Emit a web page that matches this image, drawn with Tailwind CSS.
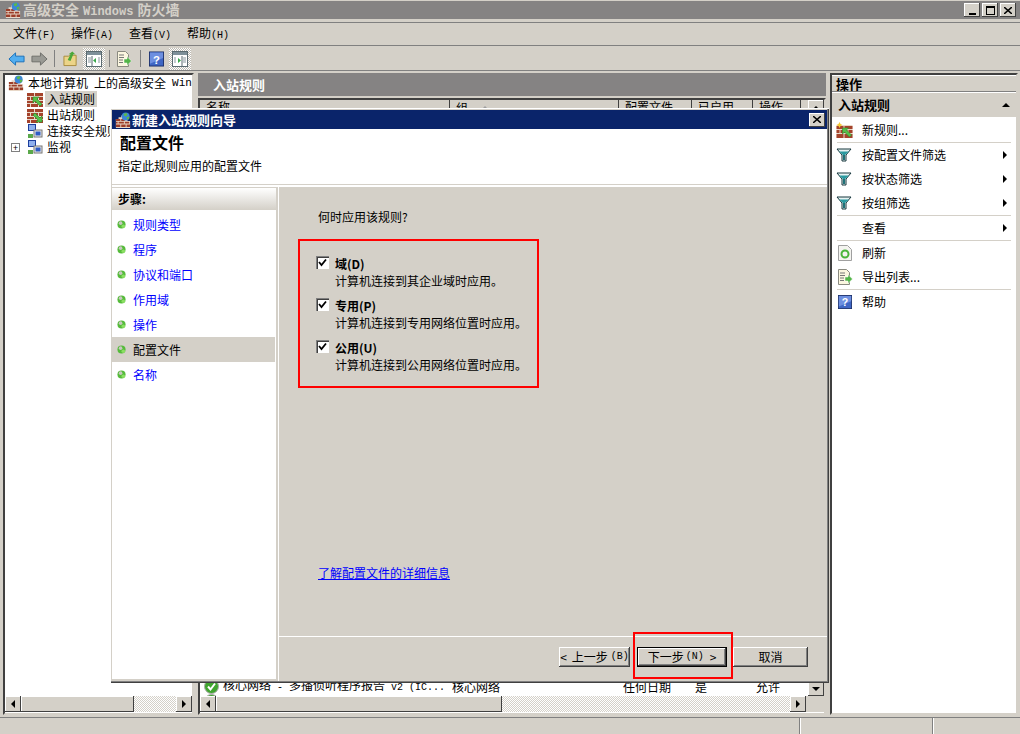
<!DOCTYPE html>
<html lang="zh"><head><meta charset="utf-8"><script src="https://cdn.jsdelivr.net/npm/@tailwindcss/browser@4"></script></head>
<body class="m-0">
<svg class="absolute w-0 h-0">
<defs>
<symbol id="wallin" viewBox="0 0 16 16"><rect x="0" y="2" width="16" height="14" fill="#e8d8c8"/><path d="M0 2h7v3H0zM8 2h8v3H8zM0 6h3v3H0zM4 6h7v3H4zM12 6h4v3h-4zM0 10h7v2H0zM8 10h8v2H8zM0 13h3v3H0zM4 13h7v3H4zM12 13h4v3h-4z" fill="#a5432c"/><path d="M6 6h6l-2 2 5 5-2 2-5-5-2 2z" fill="#55c04a" stroke="#2f8a2a" stroke-width=".6"/></symbol>
<symbol id="wallout" viewBox="0 0 16 16"><rect x="0" y="2" width="16" height="14" fill="#e8d8c8"/><path d="M0 2h7v3H0zM8 2h8v3H8zM0 6h3v3H0zM4 6h7v3H4zM12 6h4v3h-4zM0 10h7v2H0zM8 10h8v2H8zM0 13h3v3H0zM4 13h7v3H4zM12 13h4v3h-4z" fill="#a5432c"/><path d="M15 15H9l2-2-5-5 2-2 5 5 2-2z" fill="#55c04a" stroke="#2f8a2a" stroke-width=".6"/></symbol>
<symbol id="wallnew" viewBox="0 0 16 16"><rect x="0" y="3" width="16" height="13" fill="#e8d8c8"/><path d="M0 4h7v3H0zM8 4h8v3H8zM0 8h3v3H0zM4 8h7v3H4zM12 8h4v3h-4zM0 12h7v4H0zM8 12h8v4H8z" fill="#a5432c"/><path d="M6 6h6l-2 2 5 5-2 2-5-5-2 2z" fill="#55c04a" stroke="#2f8a2a" stroke-width=".6"/><path d="M3 0l1 2 2 1-2 1-1 2-1-2-2-1 2-1z" fill="#f6c930"/></symbol>
<symbol id="fw" viewBox="0 0 18 18"><path d="M1 8h3V6h3V4h4v4h3v2h3v8H1z" fill="#e8d8c8"/><path d="M1 8h5v2H1zM7 8h4v2H7zM1 11h2v2H1zM4 11h6v2H4zM11 11h5v2h-5zM1 14h5v3H1zM7 14h5v3H7zM13 14h4v3h-4z" fill="#9c3e29"/><circle cx="12" cy="5" r="4.500" fill="#3b86d8"/><path d="M10 2l3-1 1 2-2 2-2-1zM13 6l3-1v2l-2 2z" fill="#5cb84a"/></symbol>
<symbol id="fil" viewBox="0 0 16 16"><path d="M1 2h14L10 8v6H6V8z" fill="#e6f2f2" stroke="#16363c"/><path d="M3 4.500h10L9 8H7z" fill="#2a9aa0"/><path d="M7 8h2v5H7z" fill="#1f7278"/></symbol>
<symbol id="help" viewBox="0 0 16 16"><rect x=".5" y=".5" width="15" height="15" fill="#3f66c4" stroke="#1b2f6b"/><path d="M1 1h14v6L1 13z" fill="#6d8fe0"/><text x="8" y="13" font-size="12" font-weight="700" text-anchor="middle" fill="#fff" font-family="Liberation Sans">?</text></symbol>
<symbol id="exp" viewBox="0 0 16 16"><path d="M1.500.5h8l3 3v12h-11z" fill="#fbf6df" stroke="#8a8a80"/><path d="M3 4h5M3 6.500h5M3 9h4M3 11.500h4" stroke="#777"/><path d="M8 8h3V5.500L15.500 10 11 14.500V12H8z" fill="#53b548" stroke="#fff" stroke-width=".5"/></symbol>
<symbol id="paneleft" viewBox="0 0 16 16"><rect x=".5" y=".5" width="15" height="15" fill="#fff" stroke="#5a6a70"/><path d="M1 1h14v3H1z" fill="#7d8f98"/><path d="M6 5v10" stroke="#5a6a70"/><path d="M2 7h3M2 9h3M2 11h3M12 7h2M12 9h2M12 11h2" stroke="#8a989e"/><path d="M10 7v5L7 9.500z" fill="#3aa84a"/></symbol>
<symbol id="paneright" viewBox="0 0 16 16"><rect x=".5" y=".5" width="15" height="15" fill="#fff" stroke="#5a6a70"/><path d="M1 1h14v3H1z" fill="#7d8f98"/><path d="M10 5v10" stroke="#5a6a70"/><path d="M2 7h2M2 9h2M2 11h2M11 7h3M11 9h3M11 11h3" stroke="#8a989e"/><path d="M6 7v5l3-2.500z" fill="#3aa84a"/></symbol>
<symbol id="dot" viewBox="0 0 10 10"><circle cx="5" cy="5" r="4.500" fill="#55bb3a"/><circle cx="4" cy="3.500" r="2" fill="#c8c8c0"/><circle cx="7" cy="7" r="2" fill="#8adf62"/></symbol>
<symbol id="pc" viewBox="0 0 16 16"><rect x="1" y="1" width="8" height="7" fill="#1d3f9e"/><rect x="2" y="2" width="6" height="5" fill="#8fb0ee"/><rect x="7" y="7" width="8" height="7" fill="#e8e8e8" stroke="#777"/><rect x="8.500" y="8.500" width="5" height="4" fill="#2f5cc4"/><rect x="1" y="11" width="5" height="4" fill="#5aa84a"/></symbol>
</defs>
</svg>

<div class="relative w-[1020px] h-[734px] overflow-hidden bg-[#d4d0c8] text-[12px] leading-[14px] text-black font-['Noto_Sans_CJK_SC','Noto_Sans',sans-serif]">

  <!-- title bar -->
  <div class="flex items-center h-[18px] mt-[1px] bg-[#858383] text-[#d4d0c8] text-[14px] pl-[5px] pr-[4px]">
    <svg class="w-[16px] h-[16px] mr-[2px]"><use href="#fw"/></svg>
    <span class="font-bold whitespace-nowrap">高级安全<span class="font-['Liberation_Mono',monospace] text-[12px] mx-[4px]">Windows</span>防火墙</span>
    <div class="ml-auto flex gap-[2px]">
      <div class="w-[16px] h-[14px] bg-[#d4d0c8] shadow-[inset_-1px_-1px_#404040,inset_1px_1px_#fff] flex items-end justify-center pb-[2px]"><div class="w-[7px] h-[2px] bg-black"></div></div>
      <div class="w-[16px] h-[14px] bg-[#d4d0c8] shadow-[inset_-1px_-1px_#404040,inset_1px_1px_#fff] flex items-center justify-center"><div class="w-[9px] h-[9px] border border-black border-t-2"></div></div>
      <div class="w-[16px] h-[14px] bg-[#d4d0c8] shadow-[inset_-1px_-1px_#404040,inset_1px_1px_#fff] flex items-center justify-center"><svg class="w-[8px] h-[7px]" viewBox="0 0 8 7"><path d="M0 0l8 7M8 0L0 7" stroke="#000" stroke-width="1.500"/></svg></div>
    </div>
  </div>

  <!-- menu -->
  <div class="flex items-center h-[24px] mt-[3px] border-y border-y-[#808080] bg-[#d4d0c8] pl-[13px] gap-[16px]">
    <span>文件<span class="font-['Liberation_Mono',monospace] text-[10px]">(F)</span></span>
    <span>操作<span class="font-['Liberation_Mono',monospace] text-[10px]">(A)</span></span>
    <span>查看<span class="font-['Liberation_Mono',monospace] text-[10px]">(V)</span></span>
    <span>帮助<span class="font-['Liberation_Mono',monospace] text-[10px]">(H)</span></span>
  </div>

  <!-- toolbar -->
  <div class="flex items-center h-[25px] border-b border-b-[#808080] pl-[8px] pt-[1px]">
    <svg class="w-[17px] h-[14px]" viewBox="0 0 18 14"><path d="M1 7l7-6.500V4h9v6H8v3.500z" fill="#52aef0" stroke="#1a6fb8"/></svg>
    <svg class="w-[17px] h-[14px] ml-[6px]" viewBox="0 0 18 14"><path d="M17 7l-7-6.500V4H1v6h9v3.500z" fill="#9a9a94" stroke="#6c6c68"/></svg>
    <div class="w-px h-[17px] bg-[#808080] ml-[6px]"></div>
    <svg class="w-[15px] h-[16px] ml-[8px]" viewBox="0 0 16 16"><path d="M1 5h5l1-1h7v11H1z" fill="#ecd488" stroke="#a88a3a"/><path d="M5 9l3-6H6l4-3 3 3h-2L8 10z" fill="#4aa83a"/></svg>
    <div class="w-[22px] h-[22px] ml-[5px] flex items-center justify-center bg-[repeating-conic-gradient(#bdbab2_0_25%,#fff_0_50%)] bg-[length:2px_2px]"><svg class="w-[16px] h-[16px]"><use href="#paneleft"/></svg></div>
    <div class="w-px h-[17px] bg-[#808080] ml-[4px]"></div>
    <svg class="w-[16px] h-[16px] ml-[6px]"><use href="#exp"/></svg>
    <div class="w-px h-[17px] bg-[#808080] ml-[8px]"></div>
    <svg class="w-[15px] h-[18px] ml-[8px]"><use href="#help"/></svg>
    <div class="w-[22px] h-[22px] ml-[5px] flex items-center justify-center bg-[repeating-conic-gradient(#bdbab2_0_25%,#fff_0_50%)] bg-[length:2px_2px]"><svg class="w-[16px] h-[16px]"><use href="#paneright"/></svg></div>
  </div>

  <!-- panes -->
  <div class="flex h-[642px] mt-[2px] pl-[3px] pr-[2px] gap-[4px]">
    <!-- tree -->
    <div class="w-[191px] flex flex-col bg-white border-2 border-t-[#404040] border-l-[#404040] border-r-[#d4d0c8] border-b-[#d4d0c8] overflow-hidden">
      <div class="flex-1 overflow-hidden whitespace-nowrap">
        <div class="flex items-center h-[16px] pl-[3px]"><svg class="w-[16px] h-[16px] mr-[4px] shrink-0"><use href="#fw"/></svg><span class="shrink-0">本地计算机</span><span class="shrink-0 ml-[6px]">上的高级安全</span><span class="shrink-0 font-['Liberation_Mono',monospace] text-[11px] ml-[6px]">Wind</span></div>
        <div class="flex items-center h-[16px] pl-[22px]"><svg class="w-[16px] h-[16px] shrink-0"><use href="#wallin"/></svg><span class="ml-[2px] px-[2px] bg-[#d4d0c8] leading-[16px]">入站规则</span></div>
        <div class="flex items-center h-[16px] pl-[22px]"><svg class="w-[16px] h-[16px] shrink-0"><use href="#wallout"/></svg><span class="ml-[2px] px-[2px]">出站规则</span></div>
        <div class="flex items-center h-[16px] pl-[22px]"><svg class="w-[16px] h-[16px] shrink-0"><use href="#pc"/></svg><span class="ml-[2px] px-[2px]">连接安全规则</span></div>
        <div class="flex items-center h-[16px] pl-[6px]"><div class="w-[9px] h-[9px] border border-[#808080] flex items-center justify-center text-[9px] leading-none mr-[7px]">+</div><svg class="w-[16px] h-[16px] shrink-0"><use href="#pc"/></svg><span class="ml-[2px] px-[2px]">监视</span></div>
      </div>
      <div class="flex h-[16px] bg-[repeating-conic-gradient(#d4d0c8_0_25%,#fff_0_50%)] bg-[length:2px_2px] shrink-0 mb-[1px]">
        <div class="w-[16px] bg-[#d4d0c8] shadow-[inset_-1px_-1px_#404040,inset_1px_1px_#fff] flex items-center justify-center"><div class="border-y-[4px] border-y-transparent border-r-[4px] border-r-black"></div></div>
        <div class="w-[113px] bg-[#d4d0c8] shadow-[inset_-1px_-1px_#404040,inset_1px_1px_#fff]"></div>
        <div class="w-[16px] ml-auto bg-[#d4d0c8] shadow-[inset_-1px_-1px_#404040,inset_1px_1px_#fff] flex items-center justify-center"><div class="border-y-[4px] border-y-transparent border-l-[4px] border-l-black"></div></div>
      </div>
    </div>

    <!-- centre -->
    <div class="w-[628px] flex flex-col">
      <div class="h-[23px] bg-[#858383] text-white font-bold text-[13px] flex items-center pl-[15px]">入站规则</div>
      <div class="flex-1 mt-[2px] flex flex-col border-2 border-t-[#404040] border-l-[#404040] border-r-[#d4d0c8] border-b-[#d4d0c8] bg-white overflow-hidden">
        <div class="flex h-[16px] bg-[#d4d0c8] shrink-0">
          <div class="w-[250px] border-r border-[#404040] pl-[6px]">名称</div>
          <div class="w-[169px] border-r border-[#404040] pl-[6px] flex items-center gap-[12px]">组<div class="border-x-[5px] border-x-transparent border-b-[5px] border-b-[#a0a0a0]"></div></div>
          <div class="w-[73px] border-r border-[#404040] pl-[6px]">配置文件</div>
          <div class="w-[61px] border-r border-[#404040] pl-[6px]">已启用</div>
          <div class="w-[48px] border-r border-[#404040] pl-[6px]">操作</div>
          <div class="ml-auto w-[16px] shadow-[inset_-1px_-1px_#404040,inset_1px_1px_#fff] flex items-center justify-center"><div class="border-x-[4px] border-x-transparent border-b-[4px] border-b-black"></div></div>
        </div>
        <div class="flex-1 flex overflow-hidden">
          <div class="flex-1 flex flex-col justify-end overflow-hidden whitespace-nowrap">
            <div class="flex items-center h-[15px] shrink-0">
              <svg class="w-[15px] h-[15px] ml-[4px] shrink-0" viewBox="0 0 15 15"><circle cx="7.500" cy="7.500" r="7" fill="#3fa52e" stroke="#aaa"/><path d="M4 7.500l2.500 3L11 4.500" stroke="#fff" stroke-width="2" fill="none"/></svg>
              <span class="w-[233px] pl-[4px] shrink-0">核心网络<span class="font-['Liberation_Mono',monospace] text-[10px]"> - </span>多播侦听程序报告<span class="font-['Liberation_Mono',monospace] text-[10px]"> v2 (IC...</span></span>
              <span class="w-[171px] shrink-0">核心网络</span>
              <span class="w-[72px] shrink-0">任何日期</span>
              <span class="w-[61px] shrink-0">是</span>
              <span>允许</span>
            </div>
            <div class="flex items-start h-[2px] shrink-0 overflow-hidden">
              <svg class="w-[15px] h-[15px] ml-[4px] shrink-0" viewBox="0 0 15 15"><circle cx="7.500" cy="7.500" r="7" fill="#3fa52e" stroke="#aaa"/></svg>
            </div>
          </div>
          <div class="w-[16px] flex flex-col justify-end bg-[#e8e6e0] shrink-0">
            <div class="h-[15px] bg-[#d4d0c8] shadow-[inset_-1px_-1px_#404040,inset_1px_1px_#fff] flex items-center justify-center"><div class="border-x-[4px] border-x-transparent border-t-[4px] border-t-black"></div></div>
          </div>
        </div>
        <div class="flex h-[16px] shrink-0 mb-[1px]">
          <div class="flex flex-1 bg-[repeating-conic-gradient(#d4d0c8_0_25%,#fff_0_50%)] bg-[length:2px_2px]">
            <div class="w-[16px] bg-[#d4d0c8] shadow-[inset_-1px_-1px_#404040,inset_1px_1px_#fff] flex items-center justify-center"><div class="border-y-[4px] border-y-transparent border-r-[4px] border-r-black"></div></div>
            <div class="w-[286px] bg-[#d4d0c8] shadow-[inset_-1px_-1px_#404040,inset_1px_1px_#fff]"></div>
            <div class="w-[16px] ml-auto bg-[#d4d0c8] shadow-[inset_-1px_-1px_#404040,inset_1px_1px_#fff] flex items-center justify-center"><div class="border-y-[4px] border-y-transparent border-l-[4px] border-l-black"></div></div>
          </div>
          <div class="w-[18px] bg-[#d4d0c8]"></div>
        </div>
      </div>
    </div>

    <!-- actions -->
    <div class="flex-1 flex flex-col bg-white border-2 border-t-[#404040] border-l-[#404040] border-r-[#d4d0c8] border-b-[#d4d0c8]">
      <div class="h-[16px] mt-[1px] bg-[#d4d0c8] font-bold pl-[4px] text-[13px] leading-[16px] border-b border-b-[#808080] shrink-0">操作</div>
      <div class="flex items-center justify-between h-[25px] bg-[#d4d0c8] border-t border-t-white font-bold text-[13px] pl-[6px] pr-[6px] shrink-0">入站规则<div class="border-x-[4px] border-x-transparent border-b-[4px] border-b-black"></div></div>
      <div class="flex items-center h-[24px] pl-[4px] mt-[1px]"><svg class="w-[17px] h-[16px]"><use href="#wallnew"/></svg><span class="ml-[9px]">新规则...</span></div>
      <div class="h-px bg-[#d4d0c8] mx-[5px]"></div>
      <div class="flex items-center h-[24px] pl-[4px] mr-[9px]"><svg class="w-[16px] h-[16px]"><use href="#fil"/></svg><span class="ml-[10px]">按配置文件筛选</span><div class="ml-auto border-y-[4px] border-y-transparent border-l-[4px] border-l-black"></div></div>
      <div class="flex items-center h-[24px] pl-[4px] mr-[9px]"><svg class="w-[16px] h-[16px]"><use href="#fil"/></svg><span class="ml-[10px]">按状态筛选</span><div class="ml-auto border-y-[4px] border-y-transparent border-l-[4px] border-l-black"></div></div>
      <div class="flex items-center h-[24px] pl-[4px] mr-[9px]"><svg class="w-[16px] h-[16px]"><use href="#fil"/></svg><span class="ml-[10px]">按组筛选</span><div class="ml-auto border-y-[4px] border-y-transparent border-l-[4px] border-l-black"></div></div>
      <div class="h-px bg-[#d4d0c8] mx-[5px]"></div>
      <div class="flex items-center h-[24px] pl-[30px] mr-[9px]"><span>查看</span><div class="ml-auto border-y-[4px] border-y-transparent border-l-[4px] border-l-black"></div></div>
      <div class="h-px bg-[#d4d0c8] mx-[5px]"></div>
      <div class="flex items-center h-[24px] pl-[6px]"><svg class="w-[14px] h-[16px]" viewBox="0 0 14 16"><path d="M.5.500h9l4 4v11H.5z" fill="#f4f4f0" stroke="#a0a0a0"/><circle cx="7" cy="9" r="3.500" fill="none" stroke="#4ab53a" stroke-width="2"/></svg><span class="ml-[10px]">刷新</span></div>
      <div class="flex items-center h-[24px] pl-[5px]"><svg class="w-[16px] h-[16px]"><use href="#exp"/></svg><span class="ml-[9px]">导出列表...</span></div>
      <div class="h-px bg-[#d4d0c8] mx-[5px]"></div>
      <div class="flex items-center h-[24px] pl-[6px]"><svg class="w-[14px] h-[16px]"><use href="#help"/></svg><span class="ml-[10px]">帮助</span></div>
    </div>
  </div>

  <!-- status -->
  <div class="flex h-[18px] mt-[2px] border-t border-t-[#808080]">
    <div class="w-[800px] border-r border-r-[#808080]"></div>
    <div class="w-[133px] border-l border-l-white border-r border-r-[#808080]"></div>
    <div class="flex-1 border-l border-l-white"></div>
  </div>

  <!-- wizard dialog (floating window) -->
  <div class="absolute left-[110px] top-[108px] w-[719px] h-[575px] flex flex-col bg-[#d4d0c8] p-[2px] shadow-[inset_1px_1px_#fff,inset_-1px_-1px_#404040,inset_-2px_-2px_#808080]">
    <div class="flex items-center h-[19px] bg-[#0a246a] text-white font-bold text-[13px] pl-[3px] pr-[2px] shrink-0">
      <svg class="w-[16px] h-[16px] mr-[1px]"><use href="#fw"/></svg>新建入站规则向导
      <div class="ml-auto w-[16px] h-[14px] bg-[#d4d0c8] shadow-[inset_-1px_-1px_#404040,inset_1px_1px_#fff] flex items-center justify-center"><svg class="w-[8px] h-[7px]" viewBox="0 0 8 7"><path d="M0 0l8 7M8 0L0 7" stroke="#000" stroke-width="1.500"/></svg></div>
    </div>
    <div class="h-[56px] bg-white border-b border-b-[#d4d0c8] pl-[6px] pt-[5px] shrink-0">
      <div class="font-bold text-[16px] leading-[16px] ml-[2px]">配置文件</div>
      <div class="mt-[9px]">指定此规则应用的配置文件</div>
    </div>
    <div class="flex flex-1 pt-[2px] bg-white">
      <div class="w-[166px] border-2 border-[#d4d0c8] border-t-0 border-l-0 bg-white shrink-0 flex flex-col">
        <div class="h-[23px] border-t border-t-[#d4d0c8] bg-linear-to-b from-white to-[#d4d0c8] font-bold flex items-center pl-[6px]">步骤:</div>
        <div class="pt-[2px]">
          <div class="flex items-center h-[25px] pl-[5px] text-[#0000ff]"><svg class="w-[9px] h-[9px] mr-[7px]"><use href="#dot"/></svg>规则类型</div>
          <div class="flex items-center h-[25px] pl-[5px] text-[#0000ff]"><svg class="w-[9px] h-[9px] mr-[7px]"><use href="#dot"/></svg>程序</div>
          <div class="flex items-center h-[25px] pl-[5px] text-[#0000ff]"><svg class="w-[9px] h-[9px] mr-[7px]"><use href="#dot"/></svg>协议和端口</div>
          <div class="flex items-center h-[25px] pl-[5px] text-[#0000ff]"><svg class="w-[9px] h-[9px] mr-[7px]"><use href="#dot"/></svg>作用域</div>
          <div class="flex items-center h-[25px] pl-[5px] text-[#0000ff]"><svg class="w-[9px] h-[9px] mr-[7px]"><use href="#dot"/></svg>操作</div>
          <div class="flex items-center h-[25px] pl-[5px] bg-[#d4d0c8] w-[163px]"><svg class="w-[9px] h-[9px] mr-[7px]"><use href="#dot"/></svg>配置文件</div>
          <div class="flex items-center h-[25px] pl-[5px] text-[#0000ff]"><svg class="w-[9px] h-[9px] mr-[7px]"><use href="#dot"/></svg>名称</div>
        </div>
      </div>
      <div class="relative flex-1 flex flex-col bg-[#d4d0c8] ml-[1px]">
        <div class="flex-1 pl-[39px] pt-[23px]">
          <div class="h-[14px]">何时应用该规则?</div>
          <div class="flex flex-col mt-[33px] -ml-[2px] gap-[11px]">
            <div class="flex gap-[6px]">
              <div class="w-[13px] h-[13px] mt-[-1px] bg-white shadow-[inset_1px_1px_#808080,inset_2px_2px_#404040,inset_-1px_-1px_#fff] flex items-center justify-center"><svg class="w-[9px] h-[9px]" viewBox="0 0 9 9"><path d="M1 4l2.500 3L8 1.500" stroke="#000" stroke-width="1.800" fill="none"/></svg></div>
              <div><div class="font-bold h-[14px] leading-[14px]">域(D)</div><div class="mt-[3px] h-[14px] leading-[14px]">计算机连接到其企业域时应用。</div></div>
            </div>
            <div class="flex gap-[6px]">
              <div class="w-[13px] h-[13px] mt-[-1px] bg-white shadow-[inset_1px_1px_#808080,inset_2px_2px_#404040,inset_-1px_-1px_#fff] flex items-center justify-center"><svg class="w-[9px] h-[9px]" viewBox="0 0 9 9"><path d="M1 4l2.500 3L8 1.500" stroke="#000" stroke-width="1.800" fill="none"/></svg></div>
              <div><div class="font-bold h-[14px] leading-[14px]">专用(P)</div><div class="mt-[3px] h-[14px] leading-[14px]">计算机连接到专用网络位置时应用。</div></div>
            </div>
            <div class="flex gap-[6px]">
              <div class="w-[13px] h-[13px] mt-[-1px] bg-white shadow-[inset_1px_1px_#808080,inset_2px_2px_#404040,inset_-1px_-1px_#fff] flex items-center justify-center"><svg class="w-[9px] h-[9px]" viewBox="0 0 9 9"><path d="M1 4l2.500 3L8 1.500" stroke="#000" stroke-width="1.800" fill="none"/></svg></div>
              <div><div class="font-bold h-[14px] leading-[14px]">公用(U)</div><div class="mt-[3px] h-[14px] leading-[14px]">计算机连接到公用网络位置时应用。</div></div>
            </div>
          </div>
          <div class="mt-[194px] text-[#0000ff] underline h-[14px]">了解配置文件的详细信息</div>
        </div>
        <div class="h-[45px] shrink-0 border-t border-t-white flex items-start justify-end pr-[19px] pt-[10px]">
          <div class="w-[71px] h-[20px] bg-[#d4d0c8] shadow-[inset_-1px_-1px_#404040,inset_1px_1px_#fff,inset_-2px_-2px_#808080] flex items-center justify-center whitespace-nowrap">&lt;<span class="ml-[5px]">上一步</span><span class="font-['Liberation_Mono',monospace] text-[10px] ml-[3px]">(B)</span></div>
          <div class="w-[90px] h-[20px] ml-[7px] bg-[#d4d0c8] border border-black shadow-[inset_-1px_-1px_#404040,inset_1px_1px_#fff,inset_-2px_-2px_#808080] flex items-center justify-center whitespace-nowrap">下一步<span class="font-['Liberation_Mono',monospace] text-[10px] ml-[2px]">(N)</span><span class="ml-[6px]">&gt;</span></div>
          <div class="w-[75px] h-[20px] ml-[6px] bg-[#d4d0c8] shadow-[inset_-1px_-1px_#404040,inset_1px_1px_#fff,inset_-2px_-2px_#808080] flex items-center justify-center">取消</div>
        </div>
      </div>
    </div>
  </div>

  <!-- red annotations -->
  <div class="absolute left-[298px] top-[239px] w-[241px] h-[149px] border-2 border-[#f00]"></div>
  <div class="absolute left-[633px] top-[632px] w-[100px] h-[47px] border-2 border-[#f00]"></div>
</div>
</body></html>
